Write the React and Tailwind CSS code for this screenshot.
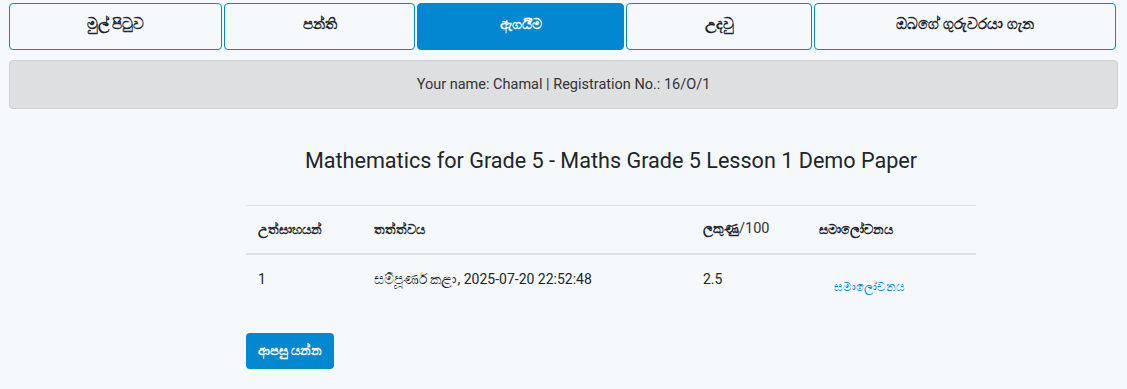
import React from 'react';

const tabs = [
  { label: 'මුල් පිටුව', width: 'w-[213px]', active: false },
  { label: 'පන්ති', width: 'w-[191px]', active: false },
  { label: 'ඇගයීම', width: 'w-[207px]', active: true },
  { label: 'උදවු', width: 'w-[186px]', active: false },
  { label: 'ඔබගේ ගුරුවරයා ගැන', width: 'w-[302px]', active: false },
];

const App = () => {
  return (
    <div className="min-h-[389px] w-full bg-[#f5f9fc] font-['Roboto','Noto_Sans',sans-serif] text-[#212529]">
      <div className="pl-[9px] pt-[3px]">
        <div className="flex gap-[2px]">
          {tabs.map(tab => (
            <button
              key={tab.label}
              className={
                tab.active
                  ? `${tab.width} h-[47px] rounded-[4px] border border-[#0288d1] bg-[#0288d1] text-white text-[14px] font-bold pb-[4px]`
                  : `${tab.width} h-[47px] rounded-[4px] border border-[#0288d1] bg-[#f5f9fc] text-[#212529] text-[15px] font-bold pb-[4px]`
              }
            >
              {tab.label}
            </button>
          ))}
        </div>

        <div className="mt-[10px] mr-[9px] h-[49px] flex items-center justify-center rounded-[4px] border border-[#cfd2d5] bg-[#dedfe1] text-[14.5px] text-[#333]">
          Your name: Chamal | Registration No.: 16/O/1
        </div>
      </div>

      <div className="ml-[246px] w-[730px]">
        <h2 className="mt-[38px] text-center text-[21.6px] leading-[28px] text-[#212529]">
          Mathematics for Grade 5 - Maths Grade 5 Lesson 1 Demo Paper
        </h2>

        <table className="mt-[30px] w-full border-t border-[#dee2e6] text-[14px] text-left">
          <thead>
            <tr className="border-b-2 border-[#dee2e6]">
              <th className="w-[116px] h-[48px] px-[12px] text-[13px] font-bold">උත්සාහයන්</th>
              <th className="w-[329px] px-[12px] text-[13px] font-bold">තත්ත්වය</th>
              <th className="w-[116px] px-[12px] text-[13px] font-bold">
                ලකුණු<span className="font-normal text-[14.5px] text-[#333]">/100</span>
              </th>
              <th className="px-[12px] text-[13px] font-bold">සමාලෝචනය</th>
            </tr>
          </thead>
          <tbody>
            <tr>
              <td className="px-[12px] pt-[14px] pb-[12px] align-top">1</td>
              <td className="px-[12px] pt-[14px] pb-[12px] align-top">සම්පූර්ණ කළා, 2025-07-20 22:52:48</td>
              <td className="px-[12px] pt-[14px] pb-[12px] align-top">2.5</td>
              <td className="px-[12px] pt-[14px] pb-[12px] align-top">
                <a href="#" className="inline-block mt-[9px] ml-[15px] text-[12px] text-[#0288d1]">සමාලෝචනය</a>
              </td>
            </tr>
          </tbody>
        </table>

        <button className="mt-[24px] h-[36px] px-[12px] rounded-[4px] bg-[#0288d1] text-white text-[13px] font-bold">
          ආපසු යන්න
        </button>
      </div>
    </div>
  );
};

export default App;
